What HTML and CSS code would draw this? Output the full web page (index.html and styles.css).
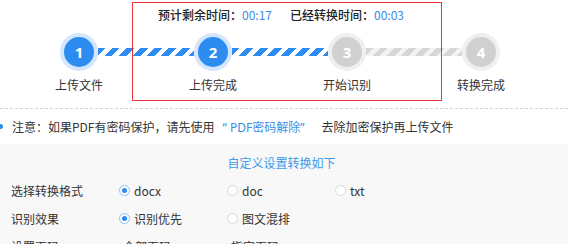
FILE: index.html
```html
<!DOCTYPE html>
<html lang="zh-CN">
<head>
<meta charset="utf-8">
<title>转换进度</title>
<link rel="stylesheet" href="styles.css">
</head>
<body>
<div class="progress">
  <div class="timers">
    <div class="timer"><span class="timer-label">预计剩余时间：</span><span class="timer-value">00:17</span></div>
    <div class="timer"><span class="timer-label">已经转换时间：</span><span class="timer-value">00:03</span></div>
  </div>
  <div class="track">
    <div class="step-dot done"><span>1</span></div>
    <div class="bar bar-blue"></div>
    <div class="step-dot done"><span>2</span></div>
    <div class="bar bar-blue"></div>
    <div class="step-dot todo"><span>3</span></div>
    <div class="bar bar-gray"></div>
    <div class="step-dot todo"><span>4</span></div>
  </div>
  <div class="labels">
    <div class="label">上传文件</div>
    <div class="label">上传完成</div>
    <div class="label">开始识别</div>
    <div class="label">转换完成</div>
  </div>
  <div class="highlight"></div>
</div>
<div class="divider"></div>
<div class="notice">注意：如果PDF有密码保护，请先使用<a class="notice-link">“ PDF密码解除”</a>去除加密保护再上传文件</div>
<div class="settings">
  <div class="settings-title">自定义设置转换如下</div>
  <div class="row">
    <div class="row-label">选择转换格式</div>
    <div class="opt"><span class="radio on"></span>docx</div>
    <div class="opt"><span class="radio"></span>doc</div>
    <div class="opt"><span class="radio"></span>txt</div>
  </div>
  <div class="row">
    <div class="row-label">识别效果</div>
    <div class="opt"><span class="radio on"></span>识别优先</div>
    <div class="opt"><span class="radio"></span>图文混排</div>
  </div>
  <div class="row row-cut">
    <div class="row-label">设置页码</div>
    <div class="opt opt-plain">全部页码</div>
    <div class="opt opt-plain">指定页码</div>
  </div>
</div>
</body>
</html>
```
FILE: styles.css
```css
html, body {
  margin: 0;
  padding: 0;
  background: #fff;
}
body {
  width: 568px;
  height: 244px;
  overflow: hidden;
  font-family: "Noto Sans CJK SC", "Noto Sans", sans-serif;
  font-size: 12px;
  color: #333;
}
.progress {
  position: relative;
  height: 108px;
}
.timers {
  display: flex;
  gap: 18px;
  padding-left: 158px;
  height: 30px;
  line-height: 30px;
}
.timer-label {
  color: #222;
  font-weight: 500;
}
.timer-value {
  color: #3a8ee6;
}
.track {
  display: flex;
  align-items: center;
  margin-top: 3px;
  margin-left: 60px;
  height: 38px;
}
.step-dot {
  width: 38px;
  height: 38px;
  border-radius: 50%;
  box-sizing: border-box;
  padding: 4px;
  flex: none;
}
.step-dot span {
  display: flex;
  align-items: center;
  justify-content: center;
  width: 30px;
  height: 30px;
  border-radius: 50%;
  color: #fff;
  font-family: "Noto Sans", sans-serif;
  font-weight: 700;
  font-size: 15px;
}
.step-dot.done { background: #d3e6fb; }
.step-dot.done span { background: #2d8cf0; }
.step-dot.todo { background: #efefef; }
.step-dot.todo span { background: #d0d0d0; }
.bar {
  width: 96px;
  height: 8px;
  flex: none;
}
.bar-blue {
  background: repeating-linear-gradient(135deg, #2d8cf0 0 5.5px, #fff 5.5px 10px);
}
.bar-gray {
  background: repeating-linear-gradient(135deg, #d6d6d6 0 5.5px, #f3f3f3 5.5px 10px);
}
.labels {
  display: flex;
  margin-left: 12px;
  margin-top: 6px;
}
.label {
  width: 134px;
  text-align: center;
  line-height: 16px;
  color: #333;
}
.highlight {
  position: absolute;
  left: 132px;
  top: 2px;
  width: 308px;
  height: 97px;
  border: 1px solid #e8343b;
}
.divider {
  border-top: 1px dashed #d2d2d2;
}
.notice {
  position: relative;
  height: 35px;
  line-height: 35px;
  padding-left: 12px;
  color: #333;
  white-space: nowrap;
}
.notice::before {
  content: "";
  position: absolute;
  left: -2px;
  top: 15px;
  width: 5px;
  height: 5px;
  border-radius: 50%;
  background: #2d8cf0;
}
.notice-link {
  font-family: "Noto Sans", "Noto Sans CJK SC", sans-serif;
  color: #3a8ee6;
  margin: 0 17px 0 8px;
}
.settings {
  background: #f8f8f8;
  padding-top: 6px;
  height: 94px;
  overflow: hidden;
}
.settings-title {
  text-align: center;
  line-height: 26px;
  color: #3d9be9;
  padding-right: 5px;
}
.row {
  display: flex;
  align-items: center;
  height: 28px;
  padding-left: 11px;
}
.row-label {
  width: 108px;
}
.opt {
  width: 108px;
  display: flex;
  align-items: center;
  gap: 4px;
}
.opt-plain {
  padding-left: 4px;
  box-sizing: border-box;
}
.radio {
  width: 11px;
  height: 11px;
  box-sizing: border-box;
  border-radius: 50%;
  border: 1px solid #d9d9d9;
  background: #fff;
  display: flex;
  align-items: center;
  justify-content: center;
}
.radio.on {
  border-color: #8fc1f3;
}
.radio.on::after {
  content: "";
  width: 5px;
  height: 5px;
  border-radius: 50%;
  background: #2d8cf0;
}
```
